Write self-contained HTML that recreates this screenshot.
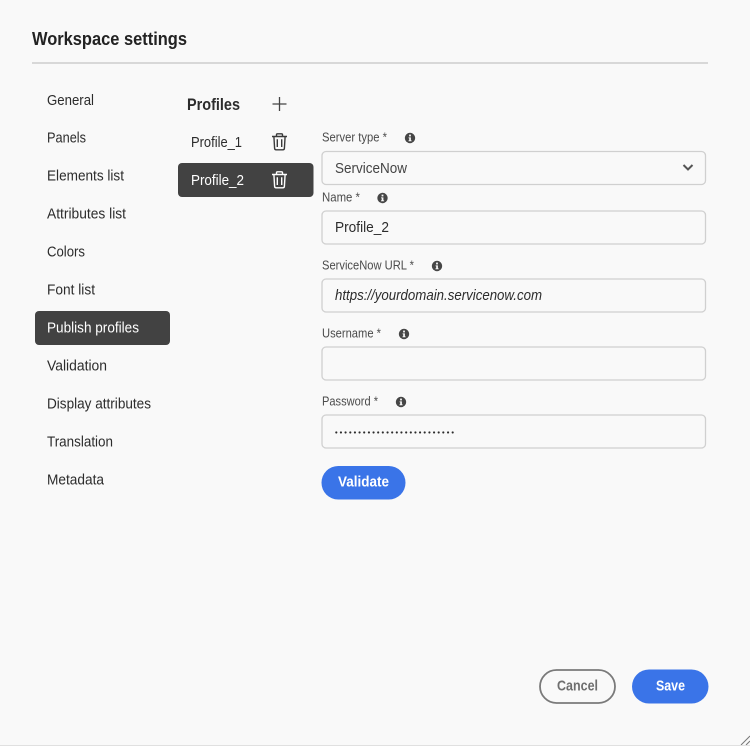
<!DOCTYPE html>
<html lang="en"><head><meta charset="utf-8"><title>Workspace settings</title>
<style>
html,body{margin:0;padding:0;width:750px;height:746px;overflow:hidden;background:#f9f9f9}
svg{display:block}
text{font-family:"Liberation Sans",sans-serif;white-space:pre}
.n{font-size:15px;fill:#2c2c2c}
.l{font-size:13px;fill:#4b4b4b}
.v{font-size:15px;fill:#2c2c2c}
.w{font-size:15px;fill:#fff}
.f{fill:#f9f9f9;stroke:#d0d0d0;stroke-width:1.3}
.i{fill:#464646}
</style></head><body>
<svg width="750" height="746" viewBox="0 0 750 746" xmlns="http://www.w3.org/2000/svg">
<defs>
<g id="info"><circle cx="0" cy="0" r="5.2" class="i"/><rect x="-0.9" y="-3.4" width="1.8" height="1.8" fill="#f9f9f9"/><path d="M-1.4-.6H.9V2.4H1.6V3.3H-1.5V2.4H-.8V.3H-1.4Z" fill="#f9f9f9"/></g>
<g id="trash" fill="none" stroke-width="1.4"><path d="M-7.5-5.5H7.5M-3-5.5V-7.2Q-3-8.2-2-8.2H2Q3-8.2 3-7.2V-5.5M-5.6-5.500L-4.900 6.300Q-4.800 7.800-3.300 7.800H3.300Q4.800 7.800 4.900 6.300L5.600-5.500M-2.200-2.800V5M2.200-2.800V5"/></g>
</defs>
<rect width="750" height="746" fill="#f9f9f9"/>
<text x="32" y="45" font-size="18.500" font-weight="700" fill="#222" textLength="155" lengthAdjust="spacingAndGlyphs">Workspace settings</text>
<rect x="32" y="62" width="676" height="2" fill="#d8d8d8"/>

<rect x="35" y="311" width="135" height="34" rx="4" fill="#424242"/>
<text class="n" x="47" y="105" textLength="47" lengthAdjust="spacingAndGlyphs">General</text>
<text class="n" x="47" y="142.500" textLength="39" lengthAdjust="spacingAndGlyphs">Panels</text>
<text class="n" x="47" y="180.500" textLength="77" lengthAdjust="spacingAndGlyphs">Elements list</text>
<text class="n" x="47" y="218.500" textLength="79" lengthAdjust="spacingAndGlyphs">Attributes list</text>
<text class="n" x="47" y="256.500" textLength="38" lengthAdjust="spacingAndGlyphs">Colors</text>
<text class="n" x="47" y="294.500" textLength="48" lengthAdjust="spacingAndGlyphs">Font list</text>
<text class="w" x="47" y="332.500" textLength="92" lengthAdjust="spacingAndGlyphs">Publish profiles</text>
<text class="n" x="47" y="370.500" textLength="60" lengthAdjust="spacingAndGlyphs">Validation</text>
<text class="n" x="47" y="408.500" textLength="104" lengthAdjust="spacingAndGlyphs">Display attributes</text>
<text class="n" x="47" y="446.500" textLength="66" lengthAdjust="spacingAndGlyphs">Translation</text>
<text class="n" x="47" y="484.500" textLength="57" lengthAdjust="spacingAndGlyphs">Metadata</text>

<text x="187" y="110" font-size="16.500" font-weight="700" fill="#2c2c2c" textLength="53" lengthAdjust="spacingAndGlyphs">Profiles</text>
<path d="M279.500 97V111M272.500 104H286.500" stroke="#444" stroke-width="1.300" fill="none"/>
<text class="n" x="191" y="147" textLength="51" lengthAdjust="spacingAndGlyphs">Profile_1</text>
<use href="#trash" x="279.500" y="142" stroke="#3a3a3a"/>
<rect x="178" y="163" width="135.500" height="34" rx="4" fill="#424242"/>
<text class="w" x="191" y="185" textLength="53" lengthAdjust="spacingAndGlyphs">Profile_2</text>
<use href="#trash" x="279.500" y="180" stroke="#fff"/>

<text class="l" x="322" y="141.500" textLength="65" lengthAdjust="spacingAndGlyphs">Server type *</text>
<use href="#info" x="410" y="138"/>
<rect class="f" x="322" y="151.500" width="383.500" height="33" rx="4"/>
<text class="v" x="335" y="173" style="fill:#444" textLength="72" lengthAdjust="spacingAndGlyphs">ServiceNow</text>
<path d="M683.500 165L688 169.500L692.500 165" fill="none" stroke="#555" stroke-width="2"/>

<text class="l" x="322" y="201.500" textLength="38" lengthAdjust="spacingAndGlyphs">Name *</text>
<use href="#info" x="382.500" y="198"/>
<rect class="f" x="322" y="211" width="383.500" height="33" rx="4"/>
<text class="v" x="335" y="232" textLength="54" lengthAdjust="spacingAndGlyphs">Profile_2</text>

<text class="l" x="322" y="269.500" textLength="92" lengthAdjust="spacingAndGlyphs">ServiceNow URL *</text>
<use href="#info" x="437" y="266"/>
<rect class="f" x="322" y="279" width="383.500" height="33" rx="4"/>
<text class="v" x="335" y="300" font-style="italic" textLength="207" lengthAdjust="spacingAndGlyphs">https://yourdomain.servicenow.com</text>

<text class="l" x="322" y="337.500" textLength="59" lengthAdjust="spacingAndGlyphs">Username *</text>
<use href="#info" x="404" y="334"/>
<rect class="f" x="322" y="347" width="383.500" height="33" rx="4"/>

<text class="l" x="322" y="405.500" textLength="56" lengthAdjust="spacingAndGlyphs">Password *</text>
<use href="#info" x="401" y="402"/>
<rect class="f" x="322" y="415" width="383.500" height="33" rx="4"/>
<text x="335" y="434.800" font-size="7.500" font-weight="700" fill="#2c2c2c" textLength="119" lengthAdjust="spacing">••••••••••••••••••••••••••</text>

<rect x="321.500" y="466" width="84" height="33.500" rx="16.700" fill="#3a74e8"/>
<text x="338" y="486.500" font-size="15" font-weight="700" fill="#fff" textLength="51" lengthAdjust="spacingAndGlyphs">Validate</text>

<rect x="540" y="670" width="75" height="33" rx="16.500" fill="#f9f9f9" stroke="#7a7a7a" stroke-width="1.800"/>
<text x="557" y="690.500" font-size="15" font-weight="700" fill="#6e6e6e" textLength="41" lengthAdjust="spacingAndGlyphs">Cancel</text>
<rect x="632" y="669.500" width="76.500" height="34" rx="17" fill="#3a74e8"/>
<text x="656" y="690.500" font-size="15" font-weight="700" fill="#fff" textLength="29" lengthAdjust="spacingAndGlyphs">Save</text>

<path d="M741 745L750 736M746 745L750 741" stroke="#777" stroke-width="1" fill="none"/>
<rect x="0" y="745" width="750" height="1" fill="#e0e0e0"/>
</svg>
</body></html>
